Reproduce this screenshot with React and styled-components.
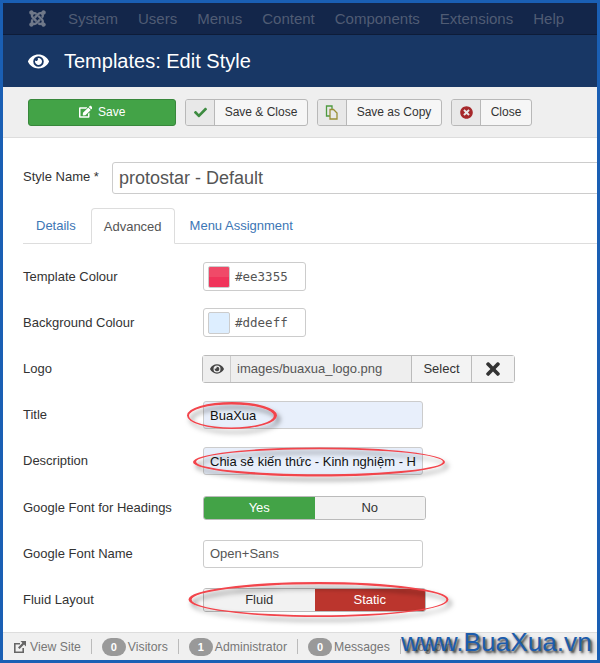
import React from "react";
import styled, { createGlobalStyle } from "styled-components";
import { FaJoomla, FaEye, FaEdit, FaCheck, FaTimesCircle, FaTimes } from "react-icons/fa";

const Global = createGlobalStyle`
  html, body { margin: 0; padding: 0; background: #1a5fb4; }
  * { box-sizing: border-box; }
  body { font-family: "Liberation Sans", Arial, sans-serif; }
`;

const Frame = styled.div`
  position: relative;
  width: 600px;
  height: 663px;
  padding: 3px;
  background: #1a5fb4;
`;

const Page = styled.div`
  display: flex;
  flex-direction: column;
  height: 100%;
  overflow: hidden;
  background: #fff;
`;

const Nav = styled.nav`
  display: flex;
  align-items: center;
  flex: none;
  height: 32px;
  padding-left: 25px;
  background: #13264a;
  border-bottom: 1px solid #0e1c38;
  color: #505c74;
  font-size: 15px;
`;

const NavLink = styled.span`
  margin-left: 20px;
`;

const Brand = styled.span`
  display: flex;
  width: 20px;
  font-size: 19px;
  color: #6f7889;
`;

const Header = styled.header`
  display: flex;
  align-items: center;
  flex: none;
  height: 52px;
  padding-left: 25px;
  background: #183765;
  color: #fff;
  font-size: 20px;
  svg { font-size: 21px; margin-right: 15px; }
`;

const Toolbar = styled.div`
  display: flex;
  align-items: center;
  flex: none;
  gap: 9px;
  height: 51px;
  padding-left: 25px;
  background: #efefef;
  border-bottom: 1px solid #ddd;
`;

const SaveButton = styled.button`
  display: flex;
  align-items: center;
  justify-content: center;
  gap: 6px;
  width: 148px;
  height: 27px;
  padding: 0;
  background: #43a347;
  border: 1px solid #38873b;
  border-radius: 3px;
  color: #fff;
  font: 12px "Liberation Sans", Arial, sans-serif;
  svg { font-size: 13.5px; }
`;

const SplitButton = styled.button`
  display: flex;
  align-items: stretch;
  width: ${(p) => p.$width}px;
  height: 27px;
  padding: 0;
  background: #f6f6f6;
  border: 1px solid #b8b8b8;
  border-radius: 3px;
  color: #333;
  font: 12px "Liberation Sans", Arial, sans-serif;
`;

const SplitIcon = styled.span`
  display: flex;
  align-items: center;
  justify-content: center;
  flex: none;
  width: 29px;
  background: #e8e8e8;
  border-right: 1px solid #b8b8b8;
  border-radius: 2px 0 0 2px;
  color: ${(p) => p.$color};
  font-size: 13px;
`;

const SplitLabel = styled.span`
  display: flex;
  align-items: center;
  justify-content: center;
  flex: 1;
`;

const NameRow = styled.div`
  display: flex;
  align-items: center;
  flex: none;
  margin-top: 24px;
  padding-left: 20px;
  color: #333;
  font-size: 13px;
`;

const NameLabel = styled.label`
  flex: none;
  width: 89px;
  padding-bottom: 3px;
`;

const NameInput = styled.div`
  flex: none;
  display: flex;
  align-items: center;
  width: 520px;
  height: 32px;
  padding-left: 6px;
  border: 1px solid #ccc;
  border-radius: 3px;
  color: #555;
  font-size: 18px;
`;

const Tabs = styled.div`
  display: flex;
  flex: none;
  height: 36px;
  margin: 14px 0 0 20px;
  border-bottom: 1px solid #ddd;
  font-size: 13px;
`;

const Tab = styled.span`
  display: flex;
  align-items: center;
  height: ${(p) => (p.$active ? "36px" : "35px")};
  margin-right: 2px;
  padding: 0 12px;
  background: ${(p) => (p.$active ? "#fff" : "transparent")};
  border: 1px solid ${(p) => (p.$active ? "#ddd" : "transparent")};
  border-bottom-color: ${(p) => (p.$active ? "#fff" : "transparent")};
  border-radius: 4px 4px 0 0;
  color: ${(p) => (p.$active ? "#555" : "#3d76b5")};
`;

const Rows = styled.div`
  flex: none;
  padding: 9.5px 0 0 20px;
`;

const Row = styled.div`
  display: flex;
  align-items: center;
  height: 46.2px;
  color: #333;
  font-size: 13px;
`;

const RowLabel = styled.label`
  flex: none;
  width: 180px;
  padding-bottom: 1px;
`;

const ColourField = styled.div`
  display: flex;
  align-items: center;
  gap: 5px;
  width: 103px;
  height: 29px;
  padding-left: 4px;
  border: 1px solid #ccc;
  border-radius: 3px;
  color: #555;
  font: 12.5px "DejaVu Sans Mono", "Liberation Mono", monospace;
`;

const Swatch = styled.span`
  width: 22px;
  height: 22px;
  border: 1px solid #ccc;
  border-radius: 2px;
  background: ${(p) => p.$color};
`;

const LogoField = styled.div`
  display: flex;
  width: 313px;
  height: 28px;
  margin-left: -1px;
  border: 1px solid #bbb;
  border-radius: 3px;
  color: #555;
`;

const LogoEye = styled.span`
  display: flex;
  align-items: center;
  justify-content: center;
  width: 28px;
  background: #eee;
  border-right: 1px solid #ccc;
  font-size: 14px;
  color: #444;
`;

const LogoPath = styled.span`
  display: flex;
  align-items: center;
  width: 180px;
  padding-left: 6px;
  background: #eee;
`;

const LogoButton = styled.span`
  display: flex;
  align-items: center;
  justify-content: center;
  flex: none;
  width: ${(p) => p.$width}px;
  background: #f3f3f3;
  border-left: 1px solid #bbb;
  color: #333;
  font-size: ${(p) => (p.$big ? "20px" : "13px")};
`;

const TextField = styled.div`
  display: flex;
  align-items: center;
  width: 220px;
  height: 28px;
  padding-left: 6px;
  overflow: hidden;
  white-space: nowrap;
  background: ${(p) => (p.$filled ? "#e8effb" : "#fff")};
  border: 1px solid #ccc;
  border-radius: 3px;
  color: ${(p) => (p.$filled ? "#111" : "#555")};
  font-size: 13px;
`;

const Toggle = styled.div`
  display: flex;
  width: 223px;
  height: 24px;
  border: 1px solid #bbb;
  border-radius: 3px;
  overflow: hidden;
`;

const ToggleOption = styled.span`
  display: flex;
  align-items: center;
  justify-content: center;
  flex: 1;
  background: ${(p) => p.$on || "#f2f2f2"};
  color: ${(p) => (p.$on ? "#fff" : "#333")};
  font-size: 13px;
`;

const Footer = styled.footer`
  display: flex;
  align-items: center;
  flex: none;
  height: 28px;
  margin-top: auto;
  padding-left: 11px;
  background: #f0f0f0;
  border-top: 1px solid #ddd;
  color: #777;
  font-size: 12.25px;
`;

const FooterItem = styled.span`
  display: flex;
  align-items: center;
  height: 15px;
  padding-right: 10px;
  margin-right: 10px;
  border-right: 1px solid #bbb;
  svg { margin-right: 4px; }
`;

const Badge = styled.span`
  display: flex;
  align-items: center;
  justify-content: center;
  width: 24px;
  height: 18px;
  margin-right: 2px;
  background: #999;
  border-radius: 9px;
  color: #fff;
  font-size: 11px;
  font-weight: bold;
`;

const LogOut = styled.span`
  color: #999;
`;

const Watermark = styled.div`
  position: absolute;
  left: 401px;
  top: 627px;
  color: #1c5cac;
  font-size: 26.2px;
  text-shadow: 2px 2px 2px rgba(0, 0, 0, 0.6), 3px 3px 4px rgba(0, 0, 0, 0.35);
`;

const Marks = styled.svg`
  position: absolute;
  left: 0;
  top: 0;
  pointer-events: none;
`;

function CopyIcon() {
  return (
    <svg width="14" height="15" viewBox="0 0 14 15" fill="none">
      <path d="M1.5 1h5.5v10h-5.5z" stroke="#4d9a3f" strokeWidth="1.3" />
      <path d="M5 4.5h3.5l3.5 3.5v6h-7z" fill="#e8e8e8" stroke="#9a8f35" strokeWidth="1.3" />
    </svg>
  );
}

function ViewSiteIcon() {
  return (
    <svg width="12" height="12" viewBox="0 0 12 12" fill="#666">
      <path d="M0 2h6v1.6H1.6v6.8h6.8V7H10v5H0z" />
      <path d="M6.5 0H12v5.5L10 3.6 5.6 8 4 6.4 8.4 2z" />
    </svg>
  );
}

function Ring({ cx, cy, rx, ry, dx = 0, dy = 0 }) {
  const oval = (x, y, a, b) =>
    `M${x - a} ${y}A${a} ${b} 0 1 0 ${x + a} ${y}A${a} ${b} 0 1 0 ${x - a} ${y}Z`;
  return (
    <path
      d={oval(cx, cy, rx, ry) + oval(cx + dx, cy + dy, rx - 2.6, ry - 2)}
      fill="#f2444c"
      fillRule="evenodd"
    />
  );
}

const menu = ["System", "Users", "Menus", "Content", "Components", "Extensions", "Help"];

const rowsAfter = [
  { label: "Title", field: <TextField $filled>BuaXua</TextField> },
  { label: "Description", field: <TextField $filled>Chia sẻ kiến thức - Kinh nghiệm - H</TextField> },
  {
    label: "Google Font for Headings",
    field: (
      <Toggle>
        <ToggleOption $on="#43a347">Yes</ToggleOption>
        <ToggleOption>No</ToggleOption>
      </Toggle>
    ),
  },
  { label: "Google Font Name", field: <TextField>Open+Sans</TextField> },
  {
    label: "Fluid Layout",
    field: (
      <Toggle>
        <ToggleOption>Fluid</ToggleOption>
        <ToggleOption $on="#bb352d">Static</ToggleOption>
      </Toggle>
    ),
  },
];

export default function App() {
  return (
    <Frame>
      <Global />
      <Page>
        <Nav>
          <Brand><FaJoomla /></Brand>
          {menu.map((m) => <NavLink key={m}>{m}</NavLink>)}
        </Nav>
        <Header><FaEye />Templates: Edit Style</Header>
        <Toolbar>
          <SaveButton><FaEdit />Save</SaveButton>
          <SplitButton $width={123}>
            <SplitIcon $color="#3d8b40"><FaCheck /></SplitIcon>
            <SplitLabel>Save &amp; Close</SplitLabel>
          </SplitButton>
          <SplitButton $width={125}>
            <SplitIcon><CopyIcon /></SplitIcon>
            <SplitLabel>Save as Copy</SplitLabel>
          </SplitButton>
          <SplitButton $width={81}>
            <SplitIcon $color="#a6282b"><FaTimesCircle /></SplitIcon>
            <SplitLabel>Close</SplitLabel>
          </SplitButton>
        </Toolbar>
        <NameRow>
          <NameLabel>Style Name *</NameLabel>
          <NameInput>protostar - Default</NameInput>
        </NameRow>
        <Tabs>
          <Tab>Details</Tab>
          <Tab $active>Advanced</Tab>
          <Tab>Menu Assignment</Tab>
        </Tabs>
        <Rows>
          <Row>
            <RowLabel>Template Colour</RowLabel>
            <ColourField>
              <Swatch $color="linear-gradient(#f04a68 50%, #f0345a 50%)" />#ee3355
            </ColourField>
          </Row>
          <Row>
            <RowLabel>Background Colour</RowLabel>
            <ColourField><Swatch $color="#ddeeff" />#ddeeff</ColourField>
          </Row>
          <Row>
            <RowLabel>Logo</RowLabel>
            <LogoField>
              <LogoEye><FaEye /></LogoEye>
              <LogoPath>images/buaxua_logo.png</LogoPath>
              <LogoButton $width={60}>Select</LogoButton>
              <LogoButton $width={43} $big><FaTimes /></LogoButton>
            </LogoField>
          </Row>
          {rowsAfter.map((r) => (
            <Row key={r.label}>
              <RowLabel>{r.label}</RowLabel>
              {r.field}
            </Row>
          ))}
        </Rows>
        <Footer>
          <FooterItem><ViewSiteIcon />View Site</FooterItem>
          <FooterItem><Badge>0</Badge>Visitors</FooterItem>
          <FooterItem><Badge>1</Badge>Administrator</FooterItem>
          <FooterItem><Badge>0</Badge>Messages</FooterItem>
          <LogOut>Log out</LogOut>
        </Footer>
      </Page>
      <Marks width="600" height="663" viewBox="0 0 600 663">
        <defs>
          <filter id="ringShadow" x="-10%" y="-40%" width="120%" height="200%">
            <feDropShadow dx="3" dy="4" stdDeviation="2.5" floodColor="#000" floodOpacity="0.5" />
          </filter>
        </defs>
        <g filter="url(#ringShadow)">
          <Ring cx={232} cy={415.5} rx={45} ry={13.5} dx={-0.6} dy={0.4} />
          <Ring cx={319} cy={462} rx={126} ry={14.5} dx={0.5} dy={-0.3} />
          <Ring cx={318.5} cy={599.5} rx={130} ry={17.5} dx={0.5} dy={0.3} />
        </g>
      </Marks>
      <Watermark>www.BuaXua.vn</Watermark>
    </Frame>
  );
}
